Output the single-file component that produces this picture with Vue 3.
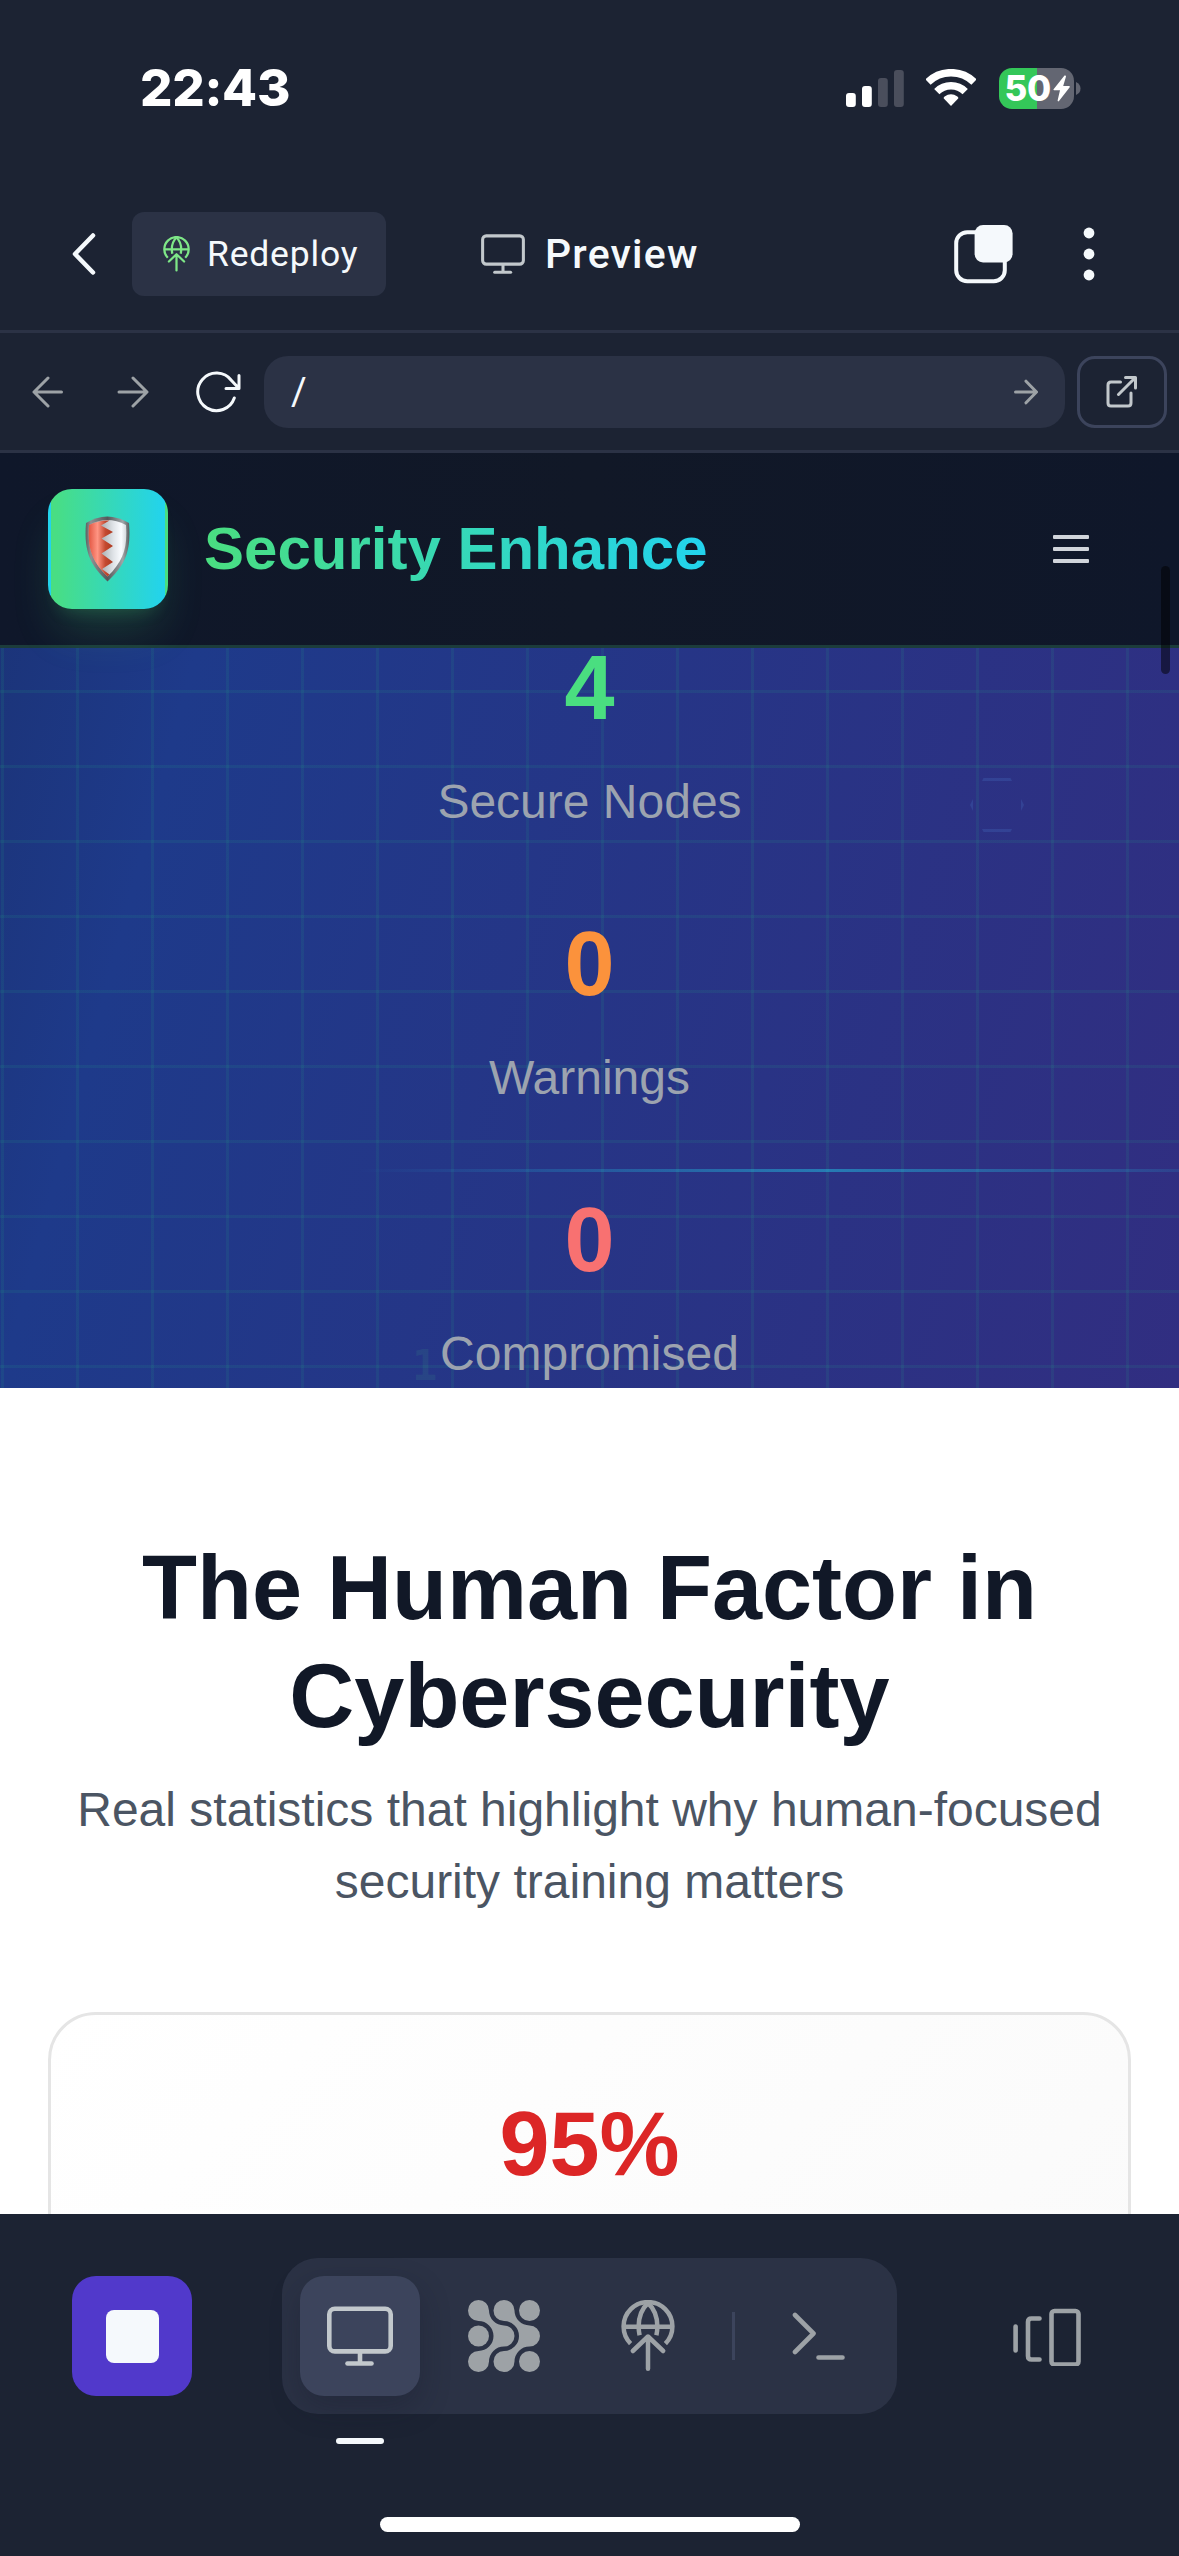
<script setup>
const stats = [
  { value: '4', label: 'Secure Nodes', tone: 'green' },
  { value: '0', label: 'Warnings', tone: 'orange' },
  { value: '0', label: 'Compromised', tone: 'red' },
]
</script>

<template>
  <div class="phone">
    <svg width="0" height="0" class="defs" aria-hidden="true">
      <symbol id="globe-up" viewBox="0 0 54 72">
        <g fill="none" stroke="currentColor" stroke-width="4.5">
          <path d="M9.6 43.6A24.4 24.4 0 1 1 44.4 43.6" />
          <path d="M3 26.7H51" />
          <path d="M27 3C20.5 9 17.6 18 17.6 26.7C17.7 30 18 32.500 18.600 35.300" />
          <path d="M27 3C33.500 9 36.400 18 36.400 26.700C36.300 30 36 32.500 35.400 35.300" />
          <path d="M11.800 51L27 36.500L42.200 51M27 37V68.800" stroke-linecap="round" stroke-linejoin="round" />
        </g>
      </symbol>
      <symbol id="monitor" viewBox="0 0 66 61">
        <g fill="none" stroke="currentColor" stroke-width="4.6">
          <rect x="2.300" y="2.800" width="61.400" height="42.600" rx="5.500" />
          <path d="M33 45.500V57" />
          <path d="M20.500 57.500H44.500" stroke-linecap="round" />
        </g>
      </symbol>
    </svg>

    <div class="status">
      <div class="time">22:43</div>
      <div class="status-icons">
        <svg class="signal" width="58" height="37" viewBox="0 0 58 37" fill="#fff">
          <rect x="0" y="23" width="9.800" height="14" rx="3" />
          <rect x="16" y="16" width="9.800" height="21" rx="3" />
          <rect x="32" y="8" width="9.800" height="29" rx="3" fill="#4a4e5c" />
          <rect x="48" y="0" width="9.800" height="37" rx="3" fill="#4a4e5c" />
        </svg>
        <svg class="wifi" width="50" height="38" viewBox="0 0 50 38">
          <g fill="none" stroke="#fff" stroke-width="7.500">
            <path d="M2 13A33 33 0 0 1 48 13" />
            <path d="M10.800 22.600A20.300 20.300 0 0 1 39.200 22.600" />
          </g>
          <path d="M25 37L17.600 29.300Q17.600 28.300 18.600 27.500A11.500 11.500 0 0 1 31.400 27.500Q32.400 28.300 32.400 29.300Z" fill="#fff" />
        </svg>
        <div class="battery">
          <span class="battery-text">50</span>
          <svg width="17" height="27" viewBox="0 0 17 27" fill="#fff"><path d="M11.500 .6L.6 14.200Q0 15.300 1.200 15.300H7L4.600 25.600Q4.800 27 6 26L16.700 12.200Q17.200 11.200 16 11.100H10.200L13 1.600Q13 0 11.500 .6Z" /></svg>
        </div>
        <svg class="nub" width="5" height="13" viewBox="0 0 5 13"><path d="M0 0Q4.500 2 4.500 6.500T0 13Z" fill="#636672" /></svg>
      </div>
    </div>

    <div class="appbar">
      <svg class="back" width="24" height="42" viewBox="0 0 24 42"><path d="M21 2.500L3 21L21 39.500" fill="none" stroke="#f5f9fc" stroke-width="4.500" stroke-linecap="round" stroke-linejoin="round" /></svg>
      <button class="redeploy">
        <svg width="27" height="36"><use href="#globe-up" /></svg>
        <span>Redeploy</span>
      </button>
      <div class="preview">
        <svg width="44" height="40.500"><use href="#monitor" /></svg>
        <span>Preview</span>
      </div>
      <svg class="copy" width="59" height="60" viewBox="0 0 59 60">
        <rect x="2.200" y="8.200" width="48.600" height="49" rx="11" fill="none" stroke="#f5f9fc" stroke-width="4" />
        <rect x="20.600" y="1" width="38" height="37.500" rx="8.500" fill="#f5f9fc" />
      </svg>
      <svg class="more" width="12" height="54" viewBox="0 0 12 54" fill="#f5f9fc">
        <circle cx="6" cy="6" r="5.400" /><circle cx="6" cy="27" r="5.400" /><circle cx="6" cy="48" r="5.400" />
      </svg>
    </div>

    <div class="urlbar">
      <svg class="nav-left" width="32" height="32" viewBox="0 0 32 32"><path d="M29.500 16H2M16 2L2 16L16 30" /></svg>
      <svg class="nav-right" width="32" height="32" viewBox="0 0 32 32"><path d="M2 16H29.500M16 2L30 16L16 30" /></svg>
      <svg class="reload" width="46" height="42" viewBox="0 0 46 42"><path d="M38.300 27A18.800 18.800 0 1 1 35.500 9.500L42.500 17M43 4.500V17.500H30" /></svg>
      <div class="url">
        <span>/</span>
        <svg width="24" height="26" viewBox="0 0 24 26"><path d="M1.500 13H22M12 2.200L22.500 13L12 23.800" /></svg>
      </div>
      <div class="open">
        <svg width="32" height="32" viewBox="0 0 32 32"><path d="M14.500 6H5Q2 6 2 9V27Q2 30 5 30H22Q25 30 25 27V17M19.500 1.500H29.500V12M12.500 18.500L29.200 1.800" /></svg>
      </div>
    </div>

    <header class="site-header">
      <div class="logo">
        <svg width="46" height="66" viewBox="0 0 46 66">
          <defs>
            <linearGradient id="steel" x1="0" x2="1">
              <stop offset="0" stop-color="#5d6062" /><stop offset=".12" stop-color="#8d9294" />
              <stop offset=".5" stop-color="#55595b" /><stop offset=".85" stop-color="#a0a5a7" /><stop offset="1" stop-color="#5a5e60" />
            </linearGradient>
            <linearGradient id="red" gradientUnits="userSpaceOnUse" x1="3" x2="27">
              <stop offset="0" stop-color="#e0513d" /><stop offset=".4" stop-color="#ff9583" />
              <stop offset=".72" stop-color="#c44a31" /><stop offset="1" stop-color="#b03b21" />
            </linearGradient>
            <linearGradient id="silver" gradientUnits="userSpaceOnUse" x1="16" x2="43">
              <stop offset="0" stop-color="#a9aeb1" /><stop offset=".45" stop-color="#dfe3e7" />
              <stop offset=".75" stop-color="#fafcff" /><stop offset="1" stop-color="#c8ced2" />
            </linearGradient>
          </defs>
          <path d="M1 7Q22 -6 44 7C46 32 42 48 22.500 65.500C3 48 -1 32 1 7Z" fill="url(#steel)" />
          <path d="M4 9Q22 -1 41 9C42.500 31 39 44.500 22.500 60.500C6 44.500 2.500 31 4 9Z" fill="url(#silver)" />
          <path d="M4 9Q14 4 24.500 4.500L16 9.500L28 16L16.500 22.500L28 30L16.500 37.500L28 46L17 53L24.500 58.500L22.500 60.500C6 44.500 2.500 31 4 9Z" fill="url(#red)" />
        </svg>
      </div>
      <div class="brand">Security Enhance</div>
      <div class="burger"><i /><i /><i /></div>
      <div class="scrollbar" />
    </header>

    <section class="hero">
      <div class="grid" />
      <div class="scanline" />
      <div class="hexagon" />
      <span class="bit">1</span>
      <div class="stats">
        <div v-for="s in stats" :key="s.label" class="stat">
          <div class="stat-value" :class="s.tone">{{ s.value }}</div>
          <div class="stat-label">{{ s.label }}</div>
        </div>
      </div>
    </section>

    <section class="human">
      <h1>The Human Factor in<br>Cybersecurity</h1>
      <p>Real statistics that highlight why human-focused<br>security training matters</p>
      <div class="card">95%</div>
    </section>

    <footer class="dock">
      <div class="dock-row">
        <div class="stop"><i /></div>
        <div class="tools">
          <div class="tool active">
            <svg width="66" height="61"><use href="#monitor" /></svg>
            <i class="marker" />
          </div>
          <div class="tool">
            <svg width="72" height="72" viewBox="0 0 72 72" fill="currentColor">
              <path d="M10.500 0A10.500 10.500 0 0 1 21 10.500A15 15 0 0 0 36 25.500A10.500 10.500 0 0 1 36 46.500A15 15 0 0 0 21 61.500A10.500 10.500 0 1 1 10.500 51A15 15 0 0 0 10.500 21A10.500 10.500 0 0 1 10.500 0Z" />
              <path transform="translate(25.500 0)" d="M10.500 0A10.500 10.500 0 0 1 21 10.500A15 15 0 0 0 36 25.500A10.500 10.500 0 0 1 36 46.500A15 15 0 0 0 21 61.500A10.500 10.500 0 1 1 10.500 51A15 15 0 0 0 10.500 21A10.500 10.500 0 0 1 10.500 0Z" />
              <circle cx="10.500" cy="36" r="10.500" /><circle cx="61.500" cy="10.500" r="10.500" /><circle cx="61.500" cy="61.500" r="10.500" />
            </svg>
          </div>
          <div class="tool"><svg width="54" height="72"><use href="#globe-up" /></svg></div>
          <div class="divider" />
          <div class="tool terminal">
            <svg width="54" height="50" viewBox="0 0 54 50"><path d="M3 4L21.500 22.500L3 41M26.500 46.500H50.500" /></svg>
          </div>
        </div>
        <svg class="devices" width="70" height="60" viewBox="0 0 70 60"><path d="M3.600 20.500V44.500M27.500 12.500H19.500Q16 12.500 16 16V50Q16 53.500 19.500 53.500H27.500" /><rect x="39.500" y="5" width="27" height="53.500" rx="3" /></svg>
      </div>
      <div class="home" />
    </footer>
  </div>
</template>

<style>
body { margin: 0; background: #1c2333; }
</style>

<style scoped>
* { box-sizing: border-box; }
svg { display: block; flex: none; }
.defs { position: absolute; }
.phone {
  width: 1179px; height: 2556px; overflow: hidden;
  display: flex; flex-direction: column;
  background: #1c2333; color: #f5f9fc;
  font-family: "Liberation Sans", Arial, sans-serif;
}
.phone > * { flex: none; }

.status { height: 176px; padding: 0 98px 0 140px; display: flex; align-items: center; justify-content: space-between; }
.time { font: 800 51px/60px Inter, sans-serif; letter-spacing: -0.3px; color: #fff; }
.status-icons { display: flex; align-items: center; }
.wifi { margin-left: 22.500px; }
.battery {
  margin-left: 22.500px; width: 75px; height: 41px; border-radius: 13px;
  display: flex; align-items: center; padding-left: 6px; gap: 1px;
  background: linear-gradient(90deg, #34c759 50.500%, #636672 50.500%);
}
.battery-text { width: 47px; font: 800 35px/41px Inter, sans-serif; letter-spacing: -0.300px; color: #fff; }
.nub { margin-left: 2.500px; }

.appbar { height: 157px; border-bottom: 3px solid #2b3245; display: flex; align-items: center; padding: 2px 84px 0 72px; }
.redeploy {
  margin: 0 0 0 36px; width: 254px; height: 84px; border: 0; border-radius: 12px; background: #2b3245;
  display: flex; align-items: center; padding: 0 0 0 31px; color: #7ee787;
}
.redeploy span { margin-left: 17px; color: #f5f9fc; font: 400 35.500px/48px Roboto, sans-serif; letter-spacing: 0.800px; }
.preview { margin-left: 95px; display: flex; align-items: center; color: #c2c8cc; }
.preview span { margin-left: 20px; color: #f5f9fc; font: 500 41px/48px Roboto, sans-serif; letter-spacing: 1.200px; }
.copy { margin-left: auto; }
.more { margin-left: 70px; }

.urlbar { height: 120px; border-bottom: 3px solid #2b3245; display: flex; align-items: center; padding: 0 11px 0 32px; }
.urlbar svg { fill: none; stroke: #9da2a6; stroke-width: 3; stroke-linecap: round; stroke-linejoin: round; }
.nav-right { margin-left: 53px; }
.urlbar .reload { margin-left: 47px; stroke: #f5f9fc; }
.url {
  margin-left: 22px; width: 801px; height: 72px; border-radius: 24px; background: #2b3245;
  display: flex; align-items: center; justify-content: space-between; padding: 0 27px;
  font: 400 38px/48px Roboto, sans-serif;
}
.open { margin-left: 12px; width: 90px; height: 72px; border: 3px solid #3c445c; border-radius: 18px; display: flex; align-items: center; justify-content: center; }
.urlbar .open svg { stroke: #c2c8cc; }

.site-header {
  position: relative; z-index: 2; height: 195px; border-bottom: 3px solid #1c3c3b;
  background: linear-gradient(90deg, #0f172a, #111827 50%, #0f172a);
  display: flex; align-items: center; padding: 0 90px 0 48px;
}
.logo {
  width: 120px; height: 120px; border: 3px solid transparent; border-radius: 24px;
  background: linear-gradient(90deg, #4ade80, #22d3ee);
  box-shadow: 0 30px 45px -9px rgba(74, 222, 128, .18), 0 12px 18px -12px rgba(74, 222, 128, .25);
  display: flex; align-items: center; justify-content: center;
}
.brand {
  margin-left: 36px; font-size: 60px; line-height: 84px; font-weight: 700; white-space: nowrap;
  background: linear-gradient(90deg, #4ade80, #22d3ee); background-clip: text; -webkit-background-clip: text; color: transparent;
}
.burger { margin-left: auto; width: 36px; display: flex; flex-direction: column; gap: 8px; }
.burger i { height: 4px; border-radius: 1px; background: #d1d5db; }
.scrollbar { position: absolute; left: 1161px; top: 113px; width: 9px; height: 108px; border-radius: 5px; background: rgba(0, 0, 0, .5); }

.hero {
  position: relative; height: 740px; overflow: hidden;
  background: linear-gradient(to bottom right, #0f172a, #1e3a8a, #312e81) left bottom / 100% 4430px no-repeat;
}
.grid {
  position: absolute; inset: 0;
  background-image:
    linear-gradient(rgba(30, 190, 130, .1) 3px, transparent 3px),
    linear-gradient(90deg, rgba(30, 190, 130, .1) 3px, transparent 3px);
  background-size: 75px 75px; background-position: 1px 42px;
}
.scanline {
  position: absolute; left: 357px; top: 521px; width: 943px; height: 3px;
  background: linear-gradient(90deg, transparent, #22d3ee, transparent); opacity: .45;
}
.hexagon {
  position: absolute; left: 970px; top: 130px; width: 54px; height: 54px; border: 3px solid rgba(96, 165, 250, .15);
  clip-path: polygon(25% 0, 75% 0, 100% 50%, 75% 100%, 25% 100%, 0 50%);
}
.bit { position: absolute; left: 412px; top: 697px; font: 700 42px/42px "DejaVu Sans Mono", monospace; color: rgba(74, 222, 128, .09); }
.stats { position: relative; display: flex; flex-direction: column; gap: 88px; text-align: center; }
.stat { display: flex; flex-direction: column; gap: 40px; }
.stat-value { font-size: 90px; line-height: 80px; font-weight: 700; }
.stat-label { font-size: 48px; line-height: 68px; color: #9ca3af; }
.green { color: #4ade80; }
.orange { color: #fb923c; }
.red { color: #f87171; }

.human { height: 826px; overflow: hidden; padding: 146px 48px 0; background: #fff; text-align: center; }
.human h1 { margin: 0; font-size: 90px; line-height: 108px; font-weight: 700; color: #111827; white-space: nowrap; }
.human p { margin: 24px 0 94px; font-size: 48px; line-height: 72px; color: #4b5563; white-space: nowrap; }
.card {
  height: 700px; padding-top: 75px; border: 3px solid #e5e5e5; border-radius: 48px;
  background: linear-gradient(135deg, #fff, #fafafa 80%);
  font-size: 90px; line-height: 108px; font-weight: 700; color: #dc2626;
}

.dock { height: 342px; background: #1c2333; display: flex; flex-direction: column; align-items: center; }
.dock-row { width: 1179px; margin-top: 44px; height: 156px; padding: 0 97px 0 72px; display: flex; align-items: center; }
.stop { width: 120px; height: 120px; border-radius: 24px; background: #5139cb; display: flex; align-items: center; justify-content: center; }
.stop i { width: 53px; height: 53px; border-radius: 8px; background: #f5f9fc; }
.tools { margin-left: 90px; width: 615px; height: 156px; border-radius: 36px; background: #2b3245; padding: 0 18px; display: flex; align-items: center; color: #9da2a6; }
.tool { position: relative; width: 120px; height: 120px; margin-right: 24px; border-radius: 24px; display: flex; align-items: center; justify-content: center; }
.tool.active { background: #3c445c; color: #c2c8cc; box-shadow: 0 12px 30px rgba(20, 22, 40, .3); }
.marker { position: absolute; left: 36px; top: 162px; width: 48px; height: 6px; border-radius: 3px; background: #f5f9fc; }
.divider { width: 3px; height: 48px; background: #3c445c; }
.terminal { margin: 0 0 0 24px; }
.terminal svg, .devices { fill: none; stroke: #9da2a6; stroke-width: 4.600; stroke-linecap: round; stroke-linejoin: round; }
.devices { margin-left: auto; }
.home { margin-top: 103px; width: 420px; height: 15px; border-radius: 8px; background: #fff; }
</style>
